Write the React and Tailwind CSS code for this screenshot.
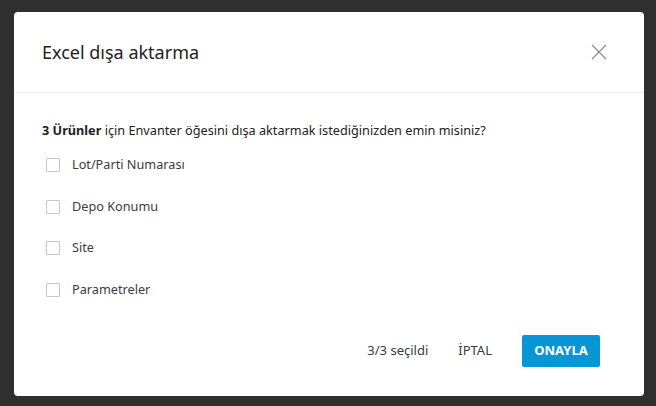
const options = ['Lot/Parti Numarası', 'Depo Konumu', 'Site', 'Parametreler']

export default function App() {
  return (
    <div
      className="h-[406px] w-[656px] bg-[#2f2f2f] pl-[14px] pt-[12px]"
      style={{ fontFamily: '"Noto Sans", "Open Sans", sans-serif' }}
    >
      <div className="flex h-[384px] w-[630px] flex-col rounded-[4px] bg-white text-[#3c3c3c]">
        <div className="flex h-[81px] shrink-0 items-center justify-between border-b border-[#ececec] pl-[28px] pr-[37px]">
          <h1 className="text-[18px] text-[#222]">Excel dışa aktarma</h1>
          <button className="text-[#8a8a8a]">
            <svg width="16" height="16" viewBox="0 0 16 16" fill="none" stroke="currentColor" strokeWidth="1.2">
              <path d="M1 1l14 14M15 1L1 15" />
            </svg>
          </button>
        </div>
        <div className="flex-1 px-[28px] pt-[28px]">
          <p className="text-[12.7px] leading-[18px] text-[#222]">
            <span className="font-bold">3 Ürünler</span> için Envanter öğesini dışa aktarmak istediğinizden emin misiniz?
          </p>
          <ul className="mt-[17px] flex flex-col gap-[23.5px] pl-[4px]">
            {options.map((o) => (
              <li key={o} className="flex h-[18px] items-center gap-[12px]">
                <span className="h-[14px] w-[14px] rounded-[1px] border border-[#c8c8c8] bg-white" />
                <span className="text-[12.7px] text-[#3c3c3c]">{o}</span>
              </li>
            ))}
          </ul>
        </div>
        <div className="flex shrink-0 items-center justify-end gap-[30px] pb-[29px] pr-[44px]">
          <span className="text-[13px] text-[#3c3c3c]">3/3 seçildi</span>
          <button className="text-[13px] text-[#3c3c3c]">İPTAL</button>
          <button className="h-[32px] w-[78px] rounded-[2px] bg-[#0696d7] text-[13px] font-bold text-white">
            ONAYLA
          </button>
        </div>
      </div>
    </div>
  )
}
